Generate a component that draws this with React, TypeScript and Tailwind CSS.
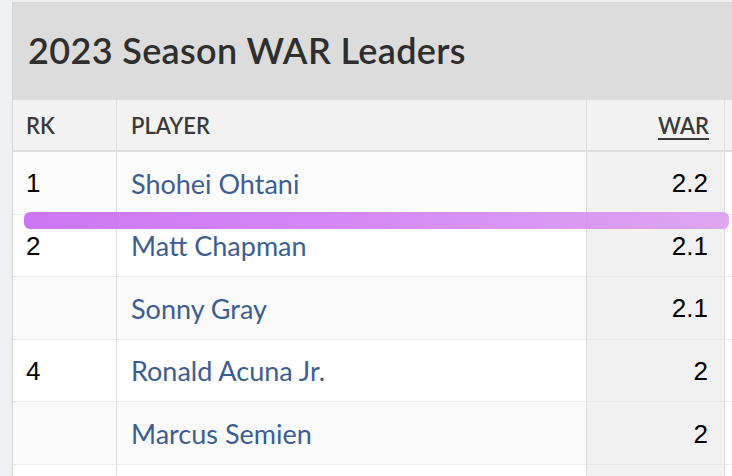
import React from 'react';

type Row = { rk: string; name: string; war: string; bg: string };

const rows: Row[] = [
  { rk: '1', name: 'Shohei Ohtani', war: '2.2', bg: 'bg-[#fcfcfc]' },
  { rk: '2', name: 'Matt Chapman', war: '2.1', bg: 'bg-white' },
  { rk: '', name: 'Sonny Gray', war: '2.1', bg: 'bg-[#fafafa]' },
  { rk: '4', name: 'Ronald Acuna Jr.', war: '2', bg: 'bg-white' },
  { rk: '', name: 'Marcus Semien', war: '2', bg: 'bg-[#fafafa]' },
  { rk: '', name: '', war: '', bg: 'bg-white' },
];

const App: React.FC = () => {
  return (
    <div className="relative w-[732px] h-[476px] overflow-hidden bg-[#eef0f2] pt-[2px] font-['Lato',sans-serif]">
      <div className="ml-[12px] border-l border-t border-[#d4d6d8] bg-white">
        <div className="h-[97px] bg-[#dcdcdc] flex items-center pl-[15px] pb-[4px]">
          <h1 className="text-[36px] font-semibold text-[#2e2e2e] tracking-[0.35px]">2023 Season WAR Leaders</h1>
        </div>

        <div className="grid grid-cols-[104px_470px_138px_1fr]">
          <div className="h-[52px] bg-[#f2f2f2] border-r border-b-2 border-[#dedede] flex items-center pl-[13px] text-[22px] font-semibold text-[#3a3a3a]">RK</div>
          <div className="h-[52px] bg-[#f2f2f2] border-r border-b-2 border-[#dedede] flex items-center pl-[14px] text-[22px] font-semibold text-[#3a3a3a]">PLAYER</div>
          <div className="h-[52px] bg-[#f2f2f2] border-r border-b-2 border-[#dedede] flex items-center justify-end pr-[15px] text-[22px] font-semibold text-[#3a3a3a]">
            <span className="underline underline-offset-[4px] decoration-[2px]">WAR</span>
          </div>
          <div className="h-[52px] bg-[#f2f2f2] border-b-2 border-[#dedede]" />

          {rows.map((r, i) => (
            <React.Fragment key={i}>
              <div className={`h-[62.6px] ${r.bg} border-r border-b border-r-[#dcdcdc] border-b-[#ececec] flex items-center pl-[13px] pt-[2px] text-[26px] text-black font-['Liberation_Sans',sans-serif]`}>{r.rk}</div>
              <div className={`h-[62.6px] ${r.bg} border-r border-b border-r-[#dcdcdc] border-b-[#ececec] flex items-center pl-[14px] pt-[2px] text-[27px] text-[#3d5e90]`}>{r.name}</div>
              <div className="h-[62.6px] bg-[#f1f1f1] border-r border-b border-r-[#dcdcdc] border-b-[#e8e8e8] flex items-center justify-end pr-[16px] pt-[2px] text-[26px] text-black font-['Liberation_Sans',sans-serif]">{r.war}</div>
              <div className="h-[62.6px] bg-white border-b border-[#ececec]" />
            </React.Fragment>
          ))}
        </div>
      </div>

      <div className="absolute left-[24px] top-[212px] w-[705px] h-[17px] rounded-[6px] bg-linear-to-r from-[#c868f3] via-[#d17ef5] to-[#dc9ef0] opacity-90 blur-[0.6px]" />
    </div>
  );
};

export default App;
